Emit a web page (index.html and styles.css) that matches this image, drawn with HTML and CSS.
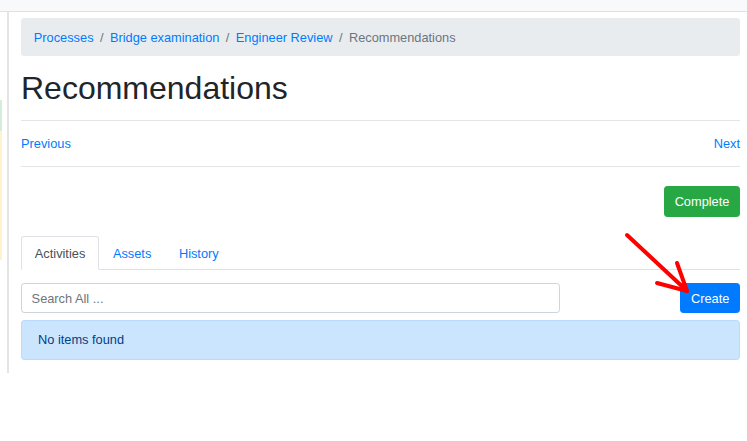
FILE: index.html
```html
<!DOCTYPE html>
<html>
<head>
<meta charset="utf-8">
<link rel="stylesheet" href="styles.css">
</head>
<body>
<div class="topbar"></div>
<div class="layout">
  <div class="side">
    <div class="strip strip-green"></div>
    <div class="strip strip-yellow"></div>
  </div>
  <main class="main">
    <nav class="breadcrumb">
      <a href="#">Processes</a><span class="sep">/</span><a href="#">Bridge examination</a><span class="sep">/</span><a href="#">Engineer Review</a><span class="sep">/</span><span class="active">Recommendations</span>
    </nav>
    <h1 class="title">Recommendations</h1>
    <hr class="rule">
    <div class="pager">
      <a href="#">Previous</a>
      <a href="#">Next</a>
    </div>
    <hr class="rule">
    <div class="actions">
      <button class="btn btn-success">Complete</button>
    </div>
    <ul class="tabs">
      <li class="tab active">Activities</li>
      <li class="tab">Assets</li>
      <li class="tab">History</li>
    </ul>
    <div class="search-row">
      <input class="search" type="text" placeholder="Search All ...">
      <button class="btn btn-primary">Create</button>
    </div>
    <div class="alert">No items found</div>
  </main>
</div>
<svg class="arrow" width="747" height="441" viewBox="0 0 747 441">
  <g stroke="#ff0000" stroke-width="4" stroke-linecap="round" fill="none">
    <line x1="627" y1="235" x2="686" y2="290"/>
    <line x1="677" y1="263" x2="687" y2="291"/>
    <line x1="657" y1="283" x2="687" y2="291"/>
  </g>
</svg>
</body>
</html>
```
FILE: styles.css
```css
* { box-sizing: border-box; }
html, body { margin: 0; padding: 0; }
body {
  font-family: "Liberation Sans", Arial, sans-serif;
  font-size: 12.8px;
  line-height: 1.5;
  color: #212529;
  background: #fff;
  position: relative;
  width: 747px;
  height: 441px;
  overflow: hidden;
}
a { color: #007bff; text-decoration: none; }

.topbar {
  height: 12px;
  background: #f8f9fa;
  border-bottom: 1px solid #dee2e6;
}
.layout { display: flex; }
.side {
  width: 7px;
  flex: none;
  padding-top: 88px;
}
.strip { width: 2px; }
.strip-green { height: 31px; background: #d4edda; }
.strip-yellow { height: 129px; background: #fff3cd; }

.main {
  flex: 1;
  border-left: 2px solid #e4e4e4;
  padding: 6px 7px 12.8px 12px;
  min-width: 0;
}

.breadcrumb {
  background: #e9ecef;
  border-radius: 3.2px;
  padding: 9.6px 12.8px;
  margin-bottom: 12.8px;
  display: flex;
}
.breadcrumb .sep { color: #6c757d; padding: 0 6.4px; }
.breadcrumb .active { color: #6c757d; }

.title {
  font-size: 32px;
  font-weight: 500;
  line-height: 1.2;
  margin: 0 0 6.4px;
}
.rule {
  border: 0;
  border-top: 1px solid rgba(0,0,0,.1);
  margin: 12.8px 0;
  height: 0;
}
.pager { display: flex; justify-content: space-between; }

.actions {
  display: flex;
  justify-content: flex-end;
  margin-top: 19px;
  margin-bottom: 19.6px;
}
.btn {
  font-family: inherit;
  font-size: 12.8px;
  line-height: 1.5;
  padding: 4.8px 9.6px;
  border: 1px solid transparent;
  border-radius: 3.2px;
  color: #fff;
  cursor: pointer;
  height: 30.4px;
}
.btn-success { background: #28a745; border-color: #28a745; }
.btn-primary { background: #007bff; border-color: #007bff; }

.tabs {
  list-style: none;
  margin: 0;
  padding: 0;
  display: flex;
  border-bottom: 1px solid #dee2e6;
}
.tab {
  padding: 6.4px 12.8px;
  border: 1px solid transparent;
  border-top-left-radius: 3.2px;
  border-top-right-radius: 3.2px;
  margin-bottom: -1px;
  color: #007bff;
}
.tab.active {
  color: #495057;
  background: #fff;
  border-color: #dee2e6 #dee2e6 #fff;
}

.search-row {
  display: flex;
  justify-content: space-between;
  margin-top: 12.8px;
  margin-bottom: 6.4px;
}
.search {
  width: 539px;
  height: 30.4px;
  font-family: inherit;
  font-size: 12.8px;
  padding: 4.8px 9.6px;
  border: 1px solid #ced4da;
  border-radius: 3.2px;
  color: #495057;
}
.search::placeholder { color: #6c757d; }

.alert {
  background: #cce5ff;
  border: 1px solid #b8daff;
  color: #004085;
  border-radius: 3.2px;
  padding: 9.6px 16px;
}

.arrow {
  position: absolute;
  left: 0;
  top: 0;
  pointer-events: none;
}
```
